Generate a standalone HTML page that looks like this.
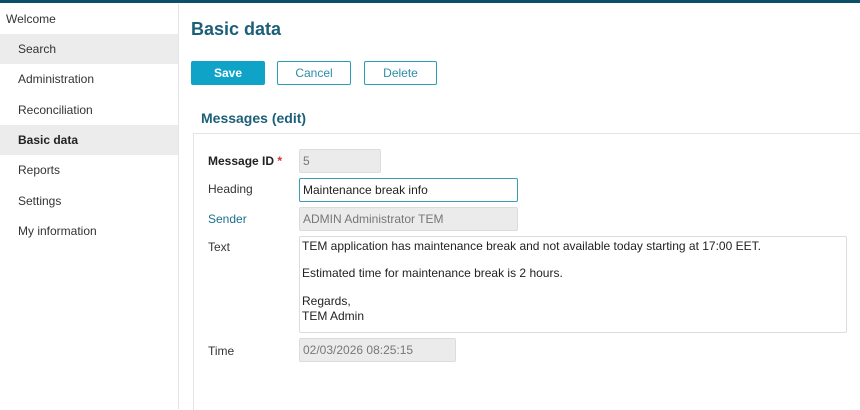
<!DOCTYPE html>
<html><head><style>
body{margin:0;width:860px;height:409px;background:#fff;font-family:"Liberation Sans",Arial,sans-serif;font-size:12px;color:#333;position:relative;overflow:hidden}
.top{position:absolute;left:0;top:0;width:860px;height:3px;background:#0d4f6a}
.side{position:absolute;left:0;top:4px;width:178px;height:405px;border-right:1px solid #e4e4e4}
.side div{position:absolute;left:0;width:178px;height:30px;line-height:30px;padding-left:18px;box-sizing:border-box}
.sel{background:#ececec}
h1{position:absolute;left:191px;top:19px;margin:0;font-size:18px;color:#1c5f78;font-weight:bold}
.btn{position:absolute;top:61px;height:24px;box-sizing:border-box;border:1px solid #2a9eb5;border-radius:2px;text-align:center;line-height:22px;color:#2a8ea7;font-size:12px;background:#fff}
h2{position:absolute;left:201px;top:110px;margin:0;font-size:14px;color:#1c5f78;font-weight:bold}
.panel{position:absolute;left:193px;top:133px;width:667px;height:276px;border-top:1px solid #e4e4e4;border-left:1px solid #e4e4e4}
.lbl{position:absolute;left:208px}
.inp{position:absolute;left:299px;box-sizing:border-box;background:#ebebeb;border:1px solid #dcdcdc;border-radius:2px;padding-left:3px;color:#777;height:24px;line-height:22px}
.ta div{line-height:15px}
</style></head><body>
<div class="top"></div>
<div class="side">
<div style="top:0;padding-left:6px">Welcome</div>
<div class="sel" style="top:30px">Search</div>
<div style="top:60px">Administration</div>
<div style="top:91px">Reconciliation</div>
<div class="sel" style="top:121px;font-weight:bold;color:#222">Basic data</div>
<div style="top:151px">Reports</div>
<div style="top:182px">Settings</div>
<div style="top:212px">My information</div>
</div>
<h1>Basic data</h1>
<div class="btn" style="left:191px;width:74px;background:#10a3c8;border-color:#10a3c8;color:#fff;font-weight:bold">Save</div>
<div class="btn" style="left:277px;width:74px">Cancel</div>
<div class="btn" style="left:364px;width:73px">Delete</div>
<h2>Messages (edit)</h2>
<div class="panel"></div>
<div class="lbl" style="top:154px;font-weight:bold;color:#222">Message ID <span style="color:#c33">*</span></div>
<div class="inp" style="top:149px;width:82px">5</div>
<div class="lbl" style="top:182px">Heading</div>
<div class="inp" style="top:178px;width:219px;background:#fff;border-color:#3a9db0;color:#222">Maintenance break info</div>
<div class="lbl" style="top:212px;color:#1c6f8e">Sender</div>
<div class="inp" style="top:207px;width:219px">ADMIN Administrator TEM</div>
<div class="lbl" style="top:240px">Text</div>
<div class="inp ta" style="top:236px;width:548px;height:97px;background:#fff;color:#222;padding-top:2px;padding-left:2px">
<div>TEM application has maintenance break and not available today starting at 17:00 EET.</div>
<div style="margin-top:12px">Estimated time for maintenance break is 2 hours.</div>
<div style="margin-top:13px">Regards,</div>
<div>TEM Admin</div>
</div>
<div class="lbl" style="top:344px">Time</div>
<div class="inp" style="top:338px;width:157px">02/03/2026 08:25:15</div>
</body></html>
